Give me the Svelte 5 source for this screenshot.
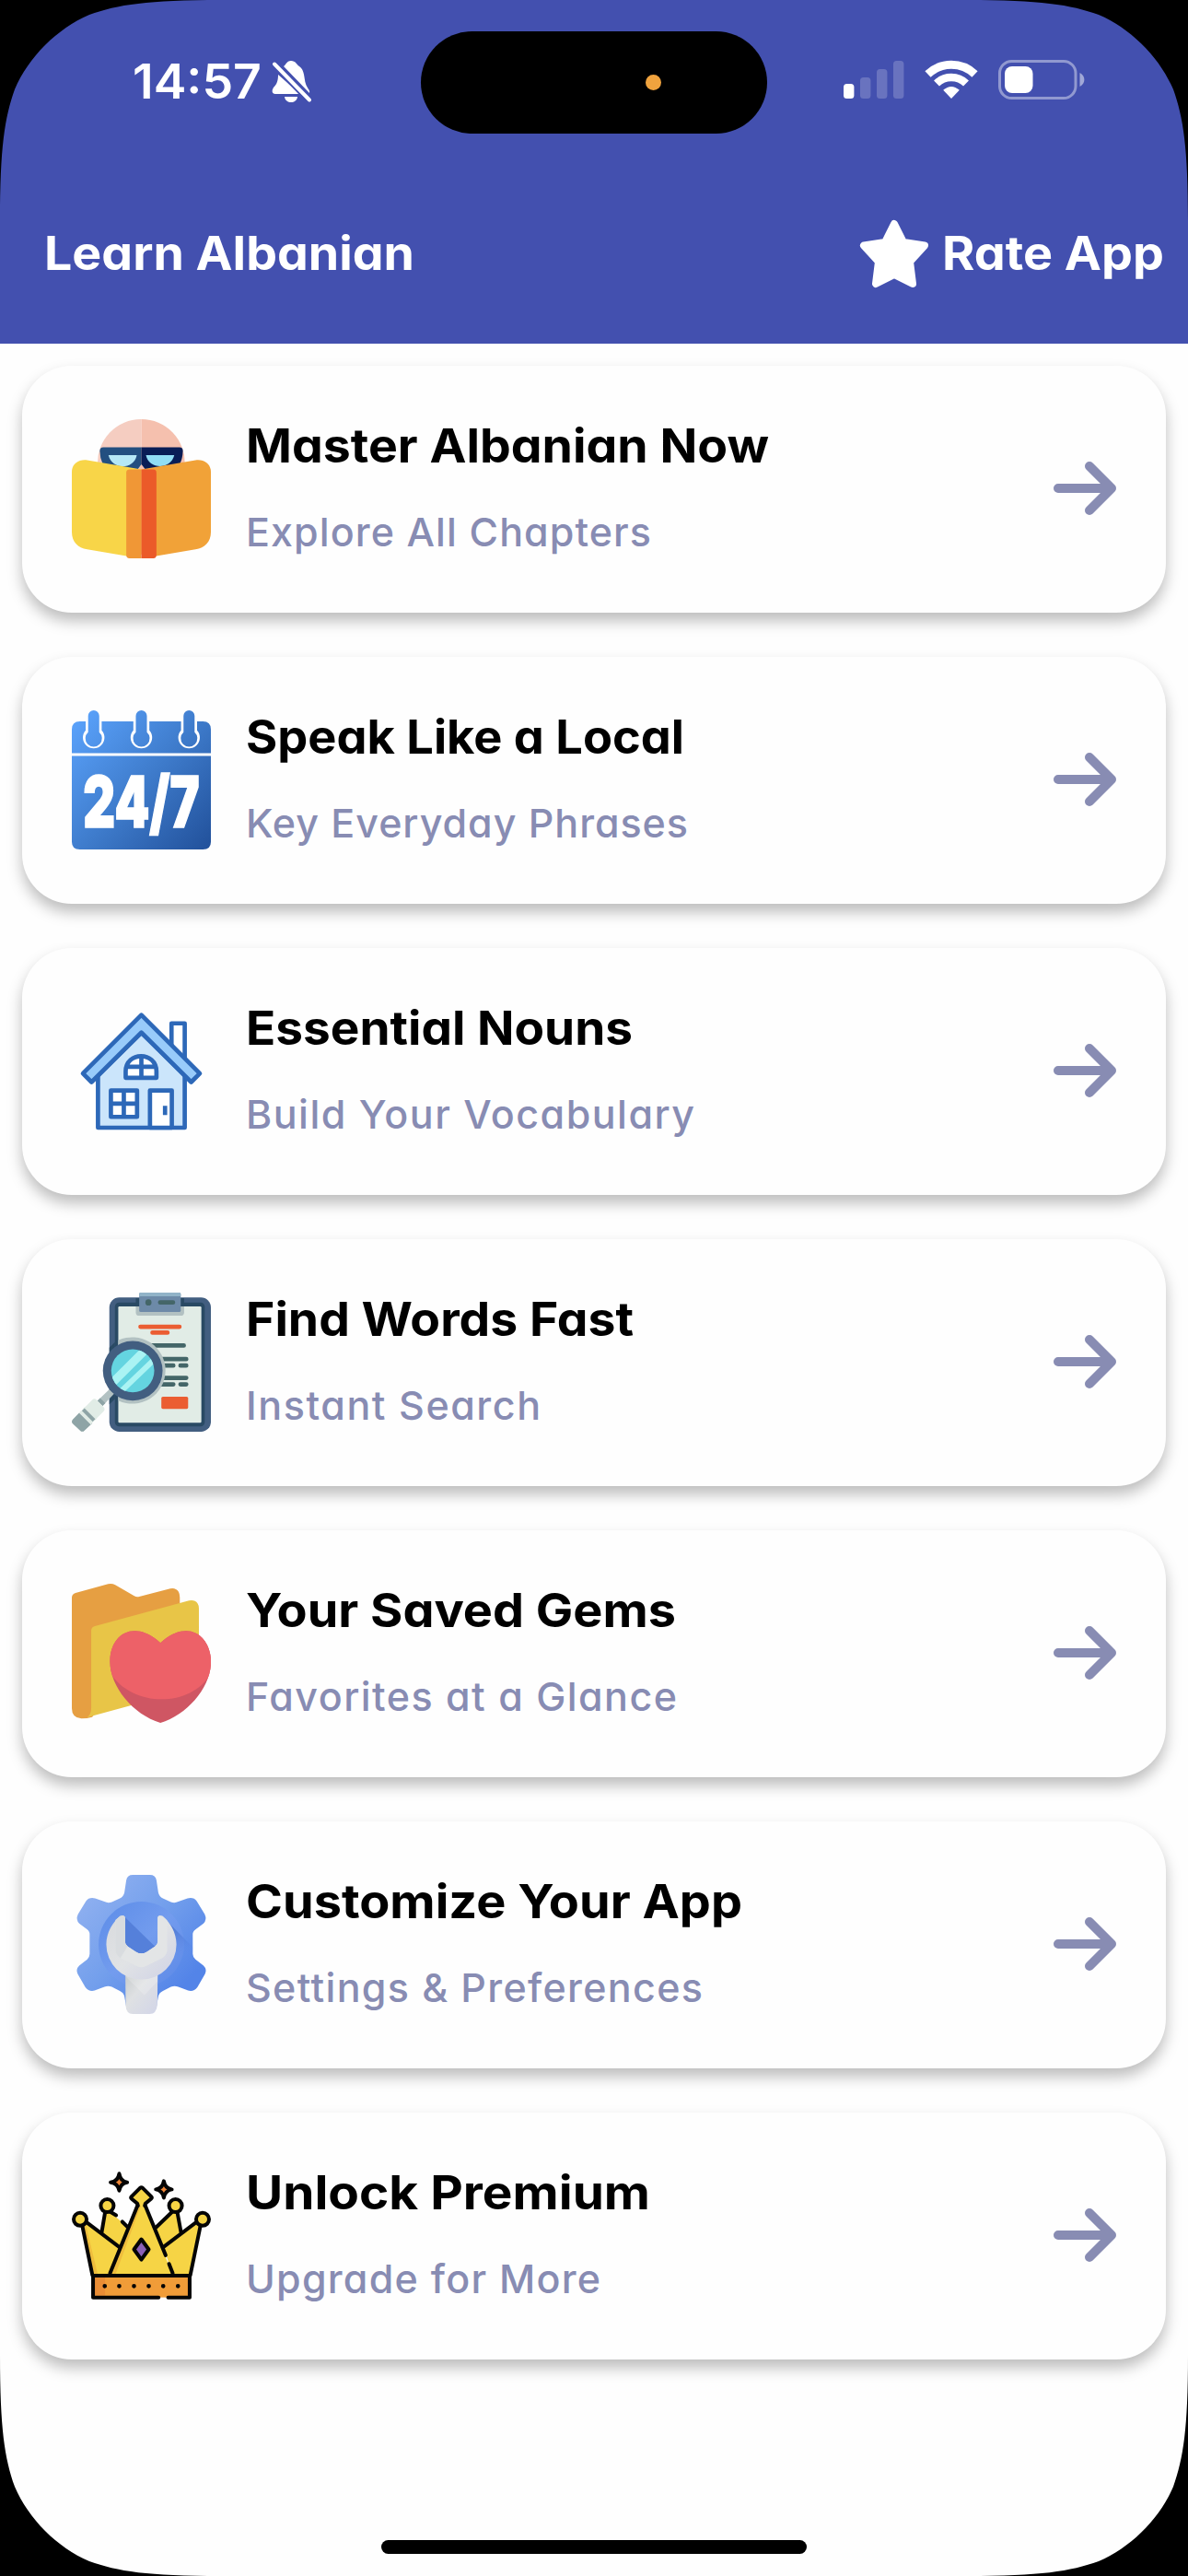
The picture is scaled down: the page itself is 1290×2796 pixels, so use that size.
<script>
  // titleWidth / subWidth: advance width of each line of text, in pixels
  const items = [
    { icon: 'book', title: 'Master Albanian Now', titleWidth: 568, sub: 'Explore All Chapters', subWidth: 440 },
    { icon: 'calendar', title: 'Speak Like a Local', titleWidth: 476, sub: 'Key Everyday Phrases', subWidth: 480 },
    { icon: 'house', title: 'Essential Nouns', titleWidth: 420, sub: 'Build Your Vocabulary', subWidth: 487 },
    { icon: 'search', title: 'Find Words Fast', titleWidth: 421, sub: 'Instant Search', subWidth: 320 },
    { icon: 'folder', title: 'Your Saved Gems', titleWidth: 467, sub: 'Favorites at a Glance', subWidth: 468 },
    { icon: 'gear', title: 'Customize Your App', titleWidth: 539, sub: 'Settings & Preferences', subWidth: 496 },
    { icon: 'crown', title: 'Unlock Premium', titleWidth: 439, sub: 'Upgrade for More', subWidth: 385 }
  ];
  const corners = ['tl', 'tr', 'bl', 'br'];
</script>

<main class="screen">
  <header class="header">
    <div class="status">
      <div class="clock">
        <svg class="time" width="146" height="60" viewBox="0 0 146 60">
          <text x="0" y="48" textLength="140" lengthAdjust="spacingAndGlyphs">14:57</text>
        </svg>
        <svg class="bell" width="44" height="48" viewBox="0 0 44 48">
          <path d="M13 7C15 6 16 1 21 1S27 5 30 7C36 11 35 20 37 26C38 30 42 33 41 36L13 7Z" fill="#fff" />
          <path d="M7 16L31 37H4C0 37 0 33 2 30C6 26 7 22 7 16Z" fill="#fff" />
          <path d="M14 40H28C27 48 15 48 14 40Z" fill="#fff" />
          <path d="M3 4.500L41 43.500" stroke="#4350af" stroke-width="8" />
          <path d="M3 4.500L41 43.500" stroke="#fff" stroke-width="4" stroke-linecap="round" />
        </svg>
      </div>
      <div class="island"><span class="mic"></span></div>
      <div class="indicators">
        <svg width="66" height="42" viewBox="0 0 66 42" fill="#fff">
          <rect x="0" y="26" width="11.400" height="16" rx="3.500" />
          <g opacity=".2">
            <rect x="18" y="19" width="11.400" height="23" rx="3.500" />
            <rect x="36" y="10" width="11.400" height="32" rx="3.500" />
            <rect x="54" y="1" width="11.400" height="41" rx="3.500" />
          </g>
        </svg>
        <svg class="wifi" width="58" height="42" viewBox="0 0 58 42" fill="none" stroke="#fff">
          <path d="M3.500 15.500A37 37 0 0 1 54.500 15.500" stroke-width="9" />
          <path d="M13 25.500A23 23 0 0 1 45 25.500" stroke-width="8.500" />
          <path d="M29 42L20.200 32.800Q29 25 37.800 32.800Z" fill="#fff" stroke="none" />
        </svg>
        <svg class="battery" width="94" height="43" viewBox="0 0 94 43">
          <rect x="1.500" y="1.500" width="82.500" height="40" rx="13" fill="none" stroke="#fff" stroke-opacity=".42" stroke-width="3" />
          <rect x="7" y="7" width="30.500" height="29" rx="8" fill="#fff" />
          <path d="M88.500 14C95 17 95 26 88.500 29Z" fill="#fff" fill-opacity=".5" />
        </svg>
      </div>
    </div>
    <div class="titlebar">
      <svg class="heading" width="420" height="80" viewBox="0 0 420 80">
        <text x="0" y="57" textLength="402" lengthAdjust="spacingAndGlyphs">Learn Albanian</text>
      </svg>
      <div class="rate">
        <svg width="76" height="74" viewBox="0 0 76 74">
          <path d="M38 4L48 24L71 27.500L55 45L58 69L38 59L18 69L21 45L5 27.500L28 24Z" fill="#fff" stroke="#fff" stroke-width="8" stroke-linejoin="round" />
        </svg>
        <svg class="heading" width="244" height="80" viewBox="0 0 244 80">
          <text x="0" y="57" textLength="241" lengthAdjust="spacingAndGlyphs">Rate App</text>
        </svg>
      </div>
    </div>
  </header>

  <section class="list">
    {#each items as item}
      <article class="card">
        {#if item.icon === 'book'}
          <svg class="icon" viewBox="54 75 452 452">
            <path d="M280 75A141 141 0 0 0 138 222H280Z" fill="#f5cdc1" />
            <path d="M280 75A141 141 0 0 1 421 222H280Z" fill="#f5c0ae" />
            <path d="M268 238L280 222L293 238Z" fill="#f5c0ae" />
            <path d="M156 166H280V222L268 238L155 222Q145 200 145 178Q145 166 156 166Z" fill="#224f80" />
            <path d="M280 166H404Q415 166 415 178Q414 204 404 222L293 238L280 222Z" fill="#091d56" />
            <path d="M173 192H265C258 238 186 244 173 192Z" fill="#b5e8f6" />
            <path d="M295 192H387C376 240 304 240 295 192Z" fill="#91ddf4" />
            <path d="M104 208L280 238V514L236 520L104 498C74 494 54 474 54 442V246C54 220 76 204 104 208Z" fill="#f8d548" />
            <path d="M456 208L280 238V514L324 520L456 498C486 494 506 474 506 442V246C506 220 484 204 456 208Z" fill="#f1a238" />
            <path d="M241 238H280V527H241Q231 527 231 516V249Q231 238 241 238Z" fill="#f09736" />
            <path d="M280 238H319Q329 238 329 249V516Q329 527 319 527H280Z" fill="#eb5a29" />
          </svg>
        {:else if item.icon === 'calendar'}
          <svg class="icon" viewBox="54 93 452 452">
            <defs>
              <linearGradient id="cal" gradientUnits="userSpaceOnUse" x1="54" y1="130" x2="506" y2="545">
                <stop offset="0" stop-color="#5aa2fb" /><stop offset=".5" stop-color="#3e7bcb" /><stop offset="1" stop-color="#21509a" />
              </linearGradient>
            </defs>
            <path d="M80 129H480Q506 129 506 155V232H54V155Q54 129 80 129ZM54 241H506V520Q506 545 480 545H80Q54 545 54 520Z" fill="url(#cal)" />
            {#each [125, 280, 435] as x}
              <g transform="translate({x} 0)">
                <path d="M-26 120H26V158A35 35 0 1 1 -26 158Z" fill="#fff" />
              </g>
            {/each}
            {#each [125, 280, 435] as x}
              <path d="M{x - 18} 111A18 18 0 0 1 {x + 18} 111V164A27 27 0 1 1 {x - 18} 164Z" fill="url(#cal)" />
            {/each}
            <text class="always" x="91" y="474" textLength="378" lengthAdjust="spacingAndGlyphs">24/7</text>
          </svg>
        {:else if item.icon === 'house'}
          <svg class="icon" viewBox="54 51 452 452" stroke="#2d68b8" stroke-width="14" stroke-linejoin="round">
            <path d="M378 122H421V245L378 205Z" fill="#fff" />
            <path d="M139 290L280 152L421 290V461H139Z" fill="#cbe5fb" />
            <path d="M280 95L470 285L442 313L280 152L118 313L90 285Z" fill="#98cbfa" />
            <path d="M229 299V278C229 212 329 212 329 278V299ZM229 263H329M280 228V299" fill="#fff" />
            <path d="M181 340H266V426H181ZM223 340V426M181 383H266" fill="#fff" />
            <path d="M308 461V340H379V461Z" fill="#fff" />
            <path d="M357 390V420" />
          </svg>
        {:else if item.icon === 'search'}
          <svg class="icon" viewBox="54 69 452 452">
            <rect x="176" y="85" width="330" height="436" rx="32" fill="#425e80" />
            <rect x="194" y="101" width="292" height="403" rx="14" fill="#294a64" />
            <path d="M262 87H419V114H262Z" fill="#294a64" />
            <rect x="205" y="114" width="270" height="378" rx="4" fill="#e1ece6" />
            <path d="M262 114H419V133Q419 144 408 144H273Q262 144 262 133Z" fill="#b2c1c2" />
            <rect x="273" y="69" width="135" height="63" rx="5" fill="#6d8aa8" />
            <path d="M273 81V73Q273 69 278 69H403Q408 69 408 73V81Z" fill="#91b3c8" />
            <g stroke-linecap="round" stroke-width="14" fill="none">
              <path d="M341 101H383" stroke="#446668" />
              <path d="M277 180H404M316 199H365" stroke="#eb5d32" />
              <path d="M290 241H418M330 285H426M330 306H384M407 306H426M330 346H426M330 367H384M407 367H426" stroke="#446668" />
            </g>
            <circle cx="303" cy="101" r="10" fill="#446668" />
            <rect x="345" y="407" width="87" height="40" rx="5" fill="#eb5d32" />
            <path d="M205 224A108 108 0 1 1 205 420Z" fill="#b2c1c2" />
            <path d="M176 248L194 230V415L176 432Z" fill="#294a64" />
            <path d="M176 383L192 397L154 437L137 421Z" fill="#b2c1c2" />
            <path d="M146 412L163 428L154 437L137 421Z" fill="#8ea4a6" />
            <circle cx="252" cy="323" r="97" fill="#425e80" />
            <clipPath id="lens"><circle cx="252" cy="323" r="70" /></clipPath>
            <circle cx="252" cy="323" r="70" fill="#64d4e0" />
            <g clip-path="url(#lens)" stroke="#aaf3f3">
              <path d="M160 388L320 228" stroke-width="27" />
              <path d="M203 400L337 272" stroke-width="18" />
            </g>
            <path d="M121 417Q128 411 134 417L158 442Q163 449 157 455L95 517Q88 524 81 517L57 495Q51 488 57 481Z" fill="#e1ece6" />
            <path d="M78 460L120 494L95 517Q88 524 81 517L57 495Q51 488 57 481Z" fill="#8ea4a6" />
            <path d="M94 443L132 481M81 456L119 494" stroke="#e1ece6" stroke-width="10" />
            <path d="M91 449L126 484" stroke="#8ea4a6" stroke-width="12" />
          </svg>
        {:else if item.icon === 'folder'}
          <svg class="icon" viewBox="54 57 452 452">
            <path d="M54 101Q55 90 66 87L172 58Q184 55 195 61L257 97Q264 101 273 99L374 73Q391 69 401 83Q405 90 405 101V130L120 490Q104 495 85 495Q54 493 54 462Z" fill="#e69f42" />
            <path d="M117 210Q117 198 129 195L435 112Q453 108 463 121Q467 127 467 137V392L104 491Q117 482 117 462Z" fill="#e8c547" />
            <clipPath id="heart"><path d="M342 249C400 195 465 198 494 256C540 350 450 476 342 509C234 476 146 350 189 256C218 198 284 195 342 249Z" /></clipPath>
            <g clip-path="url(#heart)">
              <rect x="170" y="200" width="345" height="312" fill="#cf5663" />
              <path d="M170 200H515V331C457 466 237 466 170 331Z" fill="#ed6168" />
            </g>
          </svg>
        {:else if item.icon === 'gear'}
          <svg class="icon" viewBox="54 75 452 452">
            <defs>
              <linearGradient id="gear" x1=".1" y1=".1" x2=".85" y2=".8"><stop offset="0" stop-color="#8fb0f0" /><stop offset=".5" stop-color="#739fec" /><stop offset="1" stop-color="#5384e8" /></linearGradient>
              <linearGradient id="disc" x1=".1" y1=".1" x2=".9" y2=".9"><stop offset="0" stop-color="#608fe9" /><stop offset=".5" stop-color="#739cee" /><stop offset="1" stop-color="#608ce8" /></linearGradient>
              <linearGradient id="steel" x1="0" y1="0" x2="1" y2="1"><stop offset="0" stop-color="#d8dadd" /><stop offset=".5" stop-color="#e1e3e5" /><stop offset="1" stop-color="#cfd2e6" /></linearGradient>
              <linearGradient id="shade" gradientUnits="userSpaceOnUse" x1="230" y1="300" x2="280" y2="250"><stop offset="0" stop-color="#5580da" /><stop offset="1" stop-color="#5580da" /></linearGradient>
              <linearGradient id="cast" gradientUnits="userSpaceOnUse" x1="385" y1="250" x2="400" y2="340"><stop offset="0" stop-color="#4c76cf" stop-opacity=".8" /><stop offset="1" stop-color="#5a89eb" stop-opacity="0" /></linearGradient>
              <linearGradient id="handle" x1="0" y1="0" x2="1" y2="1"><stop offset="0" stop-color="#c5cacb" /><stop offset=".4" stop-color="#dfe1e3" /><stop offset="1" stop-color="#d2d5e8" /></linearGradient>
            </defs>
            <path d="M252 75H308Q326 75 329 92L335 132Q338 147 350 151L376 163Q388 168 400 162L430 151Q450 146 460 160L486 203Q494 220 482 233L456 252Q446 259 447 270V332Q447 342 456 350L482 370Q494 382 487 397L462 440Q450 456 432 451L400 439Q388 434 376 439L350 452Q337 458 335 470L328 510H232L225 470Q223 458 210 452L184 439Q172 434 160 439L128 451Q110 456 98 440L73 397Q66 382 78 370L104 350Q112 342 112 332V270Q113 259 104 252L78 233Q66 220 74 203L100 160Q110 146 130 151L160 162Q172 168 184 163L210 151Q222 147 225 132L231 92Q234 75 252 75Z" fill="url(#gear)" />
            <circle cx="280" cy="301" r="139" fill="url(#disc)" />
            <path d="M368 230L447 310V332Q447 342 456 350L400 438Q388 434 376 439L350 452Q337 458 335 470V400Z" fill="url(#cast)" />
            <path d="M227 213L333 316V330L280 345L227 300Z" fill="url(#shade)" />
            <path d="M228 395H333L332 497Q329 527 307 527H252Q231 527 229 499Z" fill="url(#handle)" />
            <path d="M228 404L290 466L333 420V400Z" fill="#fff" opacity=".2" />
            <path d="M211 209Q227 203 227 217V292Q227 302 235 307L262 325Q280 336 298 325L325 307Q333 302 333 292V217Q333 203 349 209C373 229 394 262 394 301A114 114 0 0 1 166 301C166 262 187 229 211 209Z" fill="url(#steel)" />
            <path d="M211 209Q227 203 227 217V292Q227 302 235 307L262 325Q280 336 298 325L325 307Q333 302 333 292V217Q333 203 349 209L364 223V320Q362 338 348 345L295 371Q280 379 265 371L212 345Q197 335 196 318V222Z" fill="#e3e5e6" />
            <path d="M211 209Q227 203 227 217V292Q227 302 235 307L212 345Q197 335 196 318V222Z" fill="#d4d8dc" opacity=".7" />
          </svg>
        {:else}
          <svg class="icon" viewBox="54 33 452 452" stroke="#050505" stroke-width="12" stroke-linejoin="round" stroke-linecap="round">
            <path d="M151 249L162 184L176 181L238 233L208 296Z" fill="#f6d445" stroke="none" />
            <path d="M409 249L397 184L383 181L325 235L352 296Z" fill="#f6d445" stroke="none" />
            <path d="M88 227L102 216L208 296L178 388H121Z" fill="#f6d445" stroke="none" />
            <path d="M472 227L458 216L352 296L382 388H439Z" fill="#f6d445" stroke="none" />
            <path d="M178 388L268 160H292L382 388Z" fill="#f6d445" stroke="none" />
            <path d="M88 227L121 388H139L98 219ZM178 388L268 160H279L195 388Z" fill="#efbd3d" stroke="none" />
            <path d="M151 249L162 184M178 181L198 193M218 214L238 234M409 249L397 184M381 181L325 235M88 227L121 388M102 216L208 296M472 227L439 388M458 216L352 296M178 382L268 160M292 160L359 323M370 351L382 382" fill="none" />
            <circle cx="169" cy="162" r="21" fill="#f6d445" />
            <circle cx="391" cy="162" r="21" fill="#f6d445" />
            <circle cx="81" cy="206" r="21" fill="#f6d445" />
            <circle cx="479" cy="206" r="21" fill="#f6d445" />
            <path d="M269 162L267 155L248 139Q244 136 248 132L275 105Q280 101 285 105L312 132Q316 136 312 139L293 155L291 162" fill="#f6d445" />
            <path d="M280 271L304 304L280 337L256 304Z" fill="#8b60b6" />
            <rect x="123" y="389" width="314" height="71" fill="#f09c38" stroke="none" />
            <path d="M129 395H162V454H129Z" fill="#e98d36" stroke="none" />
            <path d="M336 460H123V389H437V460H367" fill="none" />
            <path d="M161 423V423.100M208 423V423.100M256 423V423.100M304 423V423.100M351 423V423.100M399 423V423.100" stroke-width="14" />
            <path d="M208 58Q212 83 234 86Q212 89 208 113Q204 89 180 86Q204 83 208 58Z" fill="#ee8638" />
            <path d="M353 82Q357 106 379 109Q357 113 353 136Q349 113 327 109Q349 106 353 82Z" fill="#ee8638" />
          </svg>
        {/if}
        <div class="copy">
          <svg class="title" width="620" height="80" viewBox="0 0 620 80">
            <text x="0" y="51" textLength={item.titleWidth} lengthAdjust="spacingAndGlyphs">{item.title}</text>
          </svg>
          <svg class="sub" width="620" height="80" viewBox="0 0 620 80">
            <text x="0" y="61.500" textLength={item.subWidth} lengthAdjust="spacing">{item.sub}</text>
          </svg>
        </div>
        <svg class="arrow" width="68" height="58" viewBox="0 0 68 58">
          <path d="M5 28H62M39 4L63 28L39 52" />
        </svg>
      </article>
    {/each}
  </section>

  <div class="home"></div>
  {#each corners as c}
    <svg class="corner {c}" width="240" height="240" viewBox="0 0 240 240">
      <path d="M0 240C0 160 5 128 16 97C31 62 62 31 97 16C128 5 160 0 240 0H0Z" />
    </svg>
  {/each}
</main>

<style>
  :global(body) { background: #fff; }
  .screen {
    position: relative;
    display: flex;
    flex-direction: column;
    width: 1290px;
    height: 2796px;
    overflow: hidden;
    background: #fefefe;
    font-family: Inter, 'Open Sans', sans-serif;
  }
  svg { display: block; flex: none; overflow: visible; }
  .header {
    box-sizing: border-box;
    height: 372.5px;
    flex: none;
    background: #4350af;
  }
  .status {
    display: grid;
    grid-template-columns: 457px 376px 457px;
    height: 178px;
    padding-top: 33.5px;
    box-sizing: border-box;
  }
  .clock { display: flex; align-items: flex-start; padding-left: 144px; }
  .time { margin-top: 25.5px; }
  .time text { font-size: 52px; font-weight: 560; fill: #fff; }
  .bell { margin: 31.5px 0 0 5px; }
  .island {
    display: flex;
    align-items: center;
    justify-content: flex-end;
    box-sizing: border-box;
    height: 111px;
    padding-right: 115px;
    border-radius: 56px;
    background: #000;
  }
  .mic { width: 17px; height: 17px; border-radius: 50%; background: #f0a33e; }
  .indicators { display: flex; align-items: flex-start; padding: 31.5px 0 0 83px; }
  .wifi { margin-left: 22px; }
  .battery { margin-left: 22px; }
  .titlebar {
    display: flex;
    align-items: center;
    justify-content: space-between;
    height: 195px;
    padding: 0 23px 0 48px;
  }
  .heading text { font-size: 50.5px; font-weight: 700; fill: #fff; }
  .rate { display: flex; align-items: center; gap: 14px; }
  .list { display: flex; flex-direction: column; gap: 48px; padding: 24px; }
  .card {
    display: flex;
    align-items: center;
    box-sizing: border-box;
    height: 268px;
    padding: 0 54px;
    border-radius: 54px;
    background: #fefefe;
    box-shadow: 0 9px 16px rgba(0, 0, 0, 0.26);
  }
  .icon { width: 151px; height: 151px; overflow: hidden; }
  .always { font-size: 232px; font-weight: 900; fill: #fff; stroke: #fff; stroke-width: 5px; }
  .copy { flex: 1; margin-left: 38px; }
  text { font-feature-settings: 'cv11'; }
  .time text, .always { font-feature-settings: normal; }
  .title text { font-size: 50.5px; font-weight: 700; fill: #000; }
  .sub text { font-size: 43px; font-weight: 470; fill: #888cb3; }
  .arrow path {
    fill: none;
    stroke: #888cb3;
    stroke-width: 10;
    stroke-linecap: round;
    stroke-linejoin: round;
  }
  .home {
    width: 462px;
    height: 15px;
    margin: auto auto 24px;
    border-radius: 8px;
    background: #000;
  }
  .corner { position: absolute; }
  .tl { top: 0; left: 0; }
  .tr { top: 0; right: 0; transform: scaleX(-1); }
  .bl { bottom: 0; left: 0; transform: scaleY(-1); }
  .br { bottom: 0; right: 0; transform: scale(-1); }
</style>
